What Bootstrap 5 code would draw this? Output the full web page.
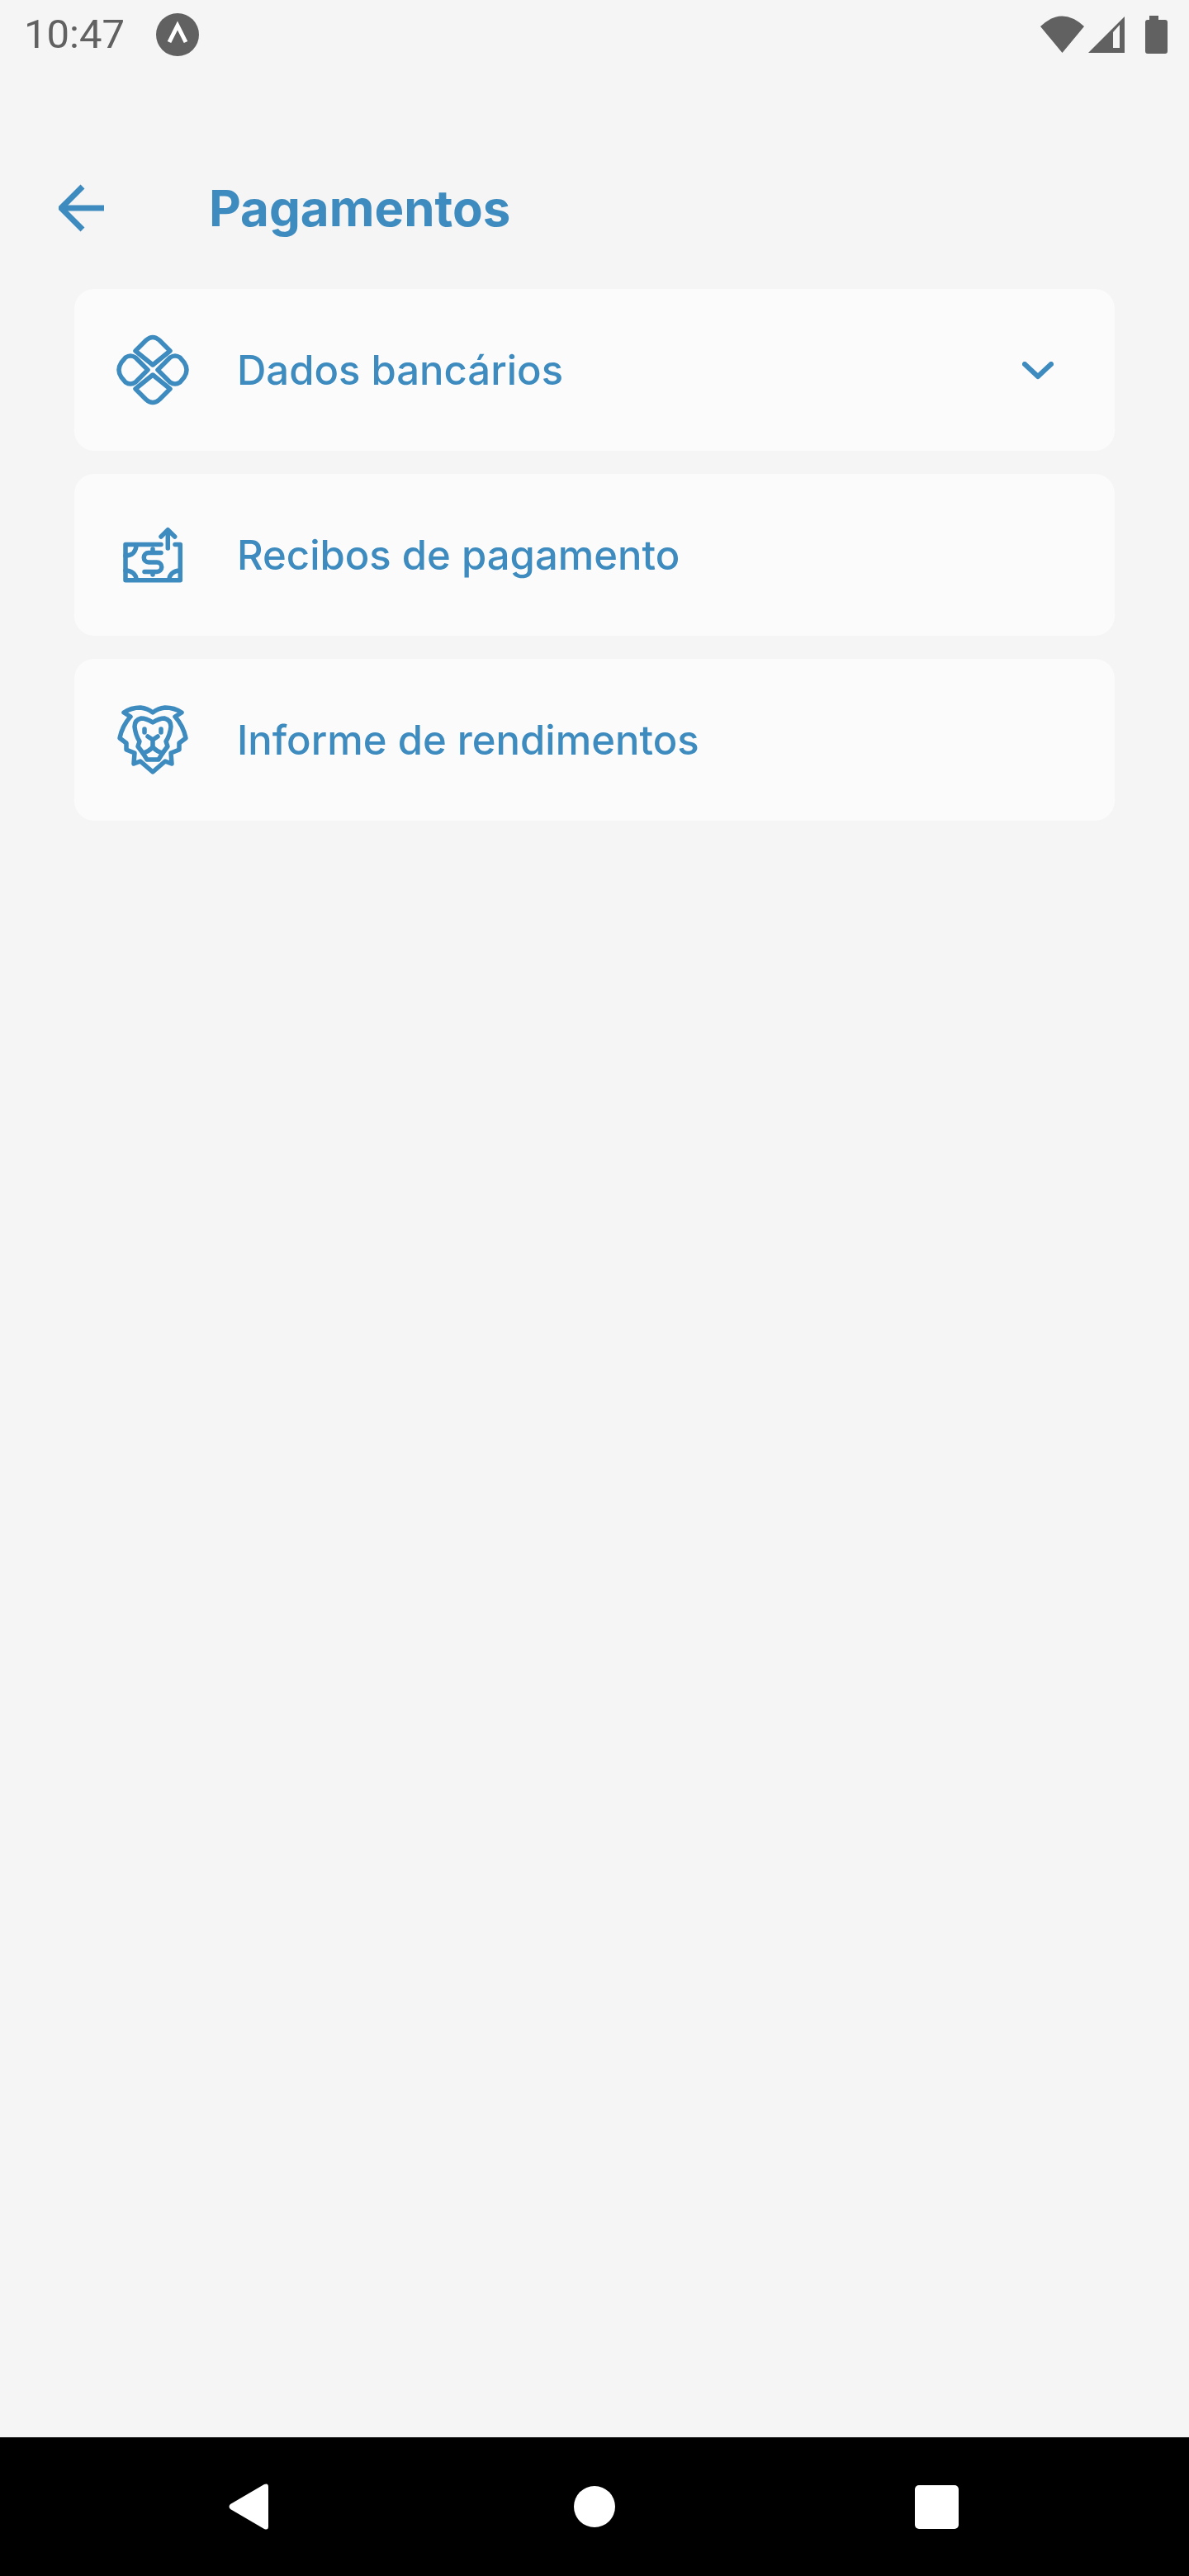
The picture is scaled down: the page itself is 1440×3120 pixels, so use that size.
<!DOCTYPE html>
<html lang="pt-BR">
<head>
  <meta charset="UTF-8" />
  <meta name="viewport" content="width=device-width, initial-scale=1.0"/>
  <title>Pagamentos</title>
  <link href="https://cdn.jsdelivr.net/npm/bootstrap@5.3.0/dist/css/bootstrap.min.css" rel="stylesheet" />
  <style>
    body {
      background: #f5f5f5;
      font-family: Inter, "Liberation Sans", sans-serif;
      color: #3d8bbf;
      overflow: hidden;
    }

    .app-screen {
      height: 3120px;
    }

    /* android status bar */
    .status-bar {
      height: 84px;
      padding: 0 26px 0 29px;
      color: #616161;
    }

    .status-time {
      font-family: Roboto, sans-serif;
      font-size: 49px;
      line-height: 84px;
      width: 160px;
    }

    .page-head {
      height: 168px;
      margin-top: 84px;
      padding-left: 71px;
    }

    .back-link {
      width: 182px;
      color: #3d8bbf;
    }

    .page-title {
      font-size: 60px;
      font-weight: 700;
      margin: 0;
      color: #3d8bbf;
    }

    .menu-list {
      padding: 14px 90px 0;
      gap: 28px;
    }

    .menu-row {
      height: 196px;
      padding-left: 47px;
      padding-right: 74px;
      background: #fbfbfb;
      border-radius: 24px;
      gap: 54px;
    }

    .menu-text {
      font-size: 49px;
      font-weight: 500;
      padding-top: 2px;
    }

    .line-icon {
      fill: none;
      stroke: currentColor;
      stroke-width: 5.5;
      stroke-linecap: round;
      stroke-linejoin: round;
      flex: none;
    }

    .chevron-icon {
      stroke-width: 6;
      margin-top: 2px;
    }

    .nav-strip {
      height: 168px;
      background: #000;
      padding-left: 277px;
    }

    .nav-home {
      margin-left: 370px;
    }

    .nav-recent {
      margin-left: 363px;
    }
  </style>
</head>
<body>

  <div class="app-screen d-flex flex-column">
    <div class="status-bar d-flex align-items-center">
      <span class="status-time">10:47</span>
      <svg width="52" height="52" viewBox="0 0 52 52">
        <circle cx="26" cy="26" r="26" fill="#616161"/>
        <path d="M16 35 L26 15 L36 35" fill="none" stroke="#fff" stroke-width="5"/>
      </svg>
      <div class="ms-auto d-flex align-items-center">
        <svg width="154" height="46" viewBox="0 0 154 46" fill="#616161">
          <path d="M0 13 Q26 -12 53 13 L26.500 45 Z"/>
          <path fill-rule="evenodd" d="M58 45 L102 1 V45 Z M88 20 V39 H96 V11 Z"/>
          <path d="M132 0 H143 V5 H151 Q154 5 154 8 V43 Q154 46 151 46 H130 Q127 46 127 43 V8 Q127 5 130 5 H132 Z"/>
        </svg>
      </div>
    </div>

    <div class="page-head d-flex align-items-center">
      <a class="back-link d-block lh-1" href="#" aria-label="Voltar">
        <svg class="d-block" width="56" height="58" viewBox="0 0 56 58" fill="none" stroke="currentColor" stroke-width="7">
          <path d="M55 29 H4"/>
          <path d="M29 3 L3 29 L29 55"/>
        </svg>
      </a>
      <h1 class="page-title">Pagamentos</h1>
    </div>

    <div class="menu-list d-flex flex-column flex-grow-1">
      <div class="menu-row d-flex align-items-center">
        <svg class="line-icon" width="96" height="96" viewBox="0 0 96 96">
          <path d="M27 25 L40 12 Q48 5 56 12 L69 25 L48 42 Z"/>
          <path d="M42 48 L27 33 Q21 29 15 33 L10 39 Q4 48 10 57 L15 63 Q21 67 27 63 Z"/>
          <path d="M54 48 L69 33 Q75 29 81 33 L86 39 Q92 48 86 57 L81 63 Q75 67 69 63 Z"/>
          <path d="M27 71 L40 84 Q48 91 56 84 L69 71 L48 54 Z"/>
        </svg>
        <span class="menu-text flex-grow-1">Dados bancários</span>
        <svg class="line-icon chevron-icon" width="38" height="22" viewBox="0 0 38 22">
          <path d="M3 3 L19 18 L35 3"/>
        </svg>
      </div>

      <div class="menu-row d-flex align-items-center">
        <svg class="line-icon" width="96" height="96" viewBox="0 0 96 96">
          <path d="M58 35.500 H15 V78.700 H81.300 V35.500 H75"/>
          <path d="M66.300 40 V19"/>
          <path d="M58 26 L66.300 17.700 L74.700 26"/>
          <path d="M28 36 C28 44 23 49 15 49"/>
          <path d="M15 67 C23 67 28 72 28 78"/>
          <path d="M81 67 C73 67 68 72 68 78"/>
          <path d="M58 45.500 H43 a5.750 5.750 0 0 0 0 11.500 h10 a5.750 5.750 0 0 1 0 11.500 H38"/>
          <path d="M48 41 V45 M48 69 V72"/>
        </svg>
        <span class="menu-text flex-grow-1">Recibos de pagamento</span>
      </div>

      <div class="menu-row d-flex align-items-center">
        <svg class="line-icon" width="96" height="96" viewBox="0 0 96 96">
          <path d="M13 15 Q22 9 33 9 Q42 10 48 15 Q54 10 63 9 Q74 9 83 15 L75 20 Q85 31 88 46 L80 52 L80 60 L70 64 L71 77 L63 74 L48 87 L33 74 L25 77 L26 64 L16 60 L16 52 L8 46 Q11 31 21 20 Z"/>
          <path d="M48 27 Q40 22 34 22 Q26 24 26 32 Q27 42 32 50 L30 56 L36 64 L41 72 H55 L60 64 L66 56 L64 50 Q69 42 70 32 Q70 24 62 22 Q56 22 48 27 Z"/>
          <path d="M38 35 V39 M58 35 V39"/>
          <path d="M42 44 L48 48 L54 44 M48 48 V57"/>
          <path d="M36 64 Q42 63 48 57 Q54 63 60 64"/>
        </svg>
        <span class="menu-text flex-grow-1">Informe de rendimentos</span>
      </div>
    </div>

    <div class="nav-strip d-flex align-items-center">
      <svg width="48" height="56" viewBox="0 0 48 56" fill="#fff">
        <path d="M43 1 Q48 -1 48 4 V52 Q48 57 43 55 L2 31 Q-1 28 2 25 Z"/>
      </svg>
      <svg class="nav-home" width="50" height="50" viewBox="0 0 50 50" fill="#fff"><circle cx="25" cy="25" r="25"/></svg>
      <svg class="nav-recent" width="53" height="53" viewBox="0 0 53 53" fill="#fff"><rect width="53" height="53" rx="5"/></svg>
    </div>
  </div>

  <script src="https://cdn.jsdelivr.net/npm/bootstrap@5.3.0/dist/js/bootstrap.bundle.min.js"></script>
</body>
</html>
